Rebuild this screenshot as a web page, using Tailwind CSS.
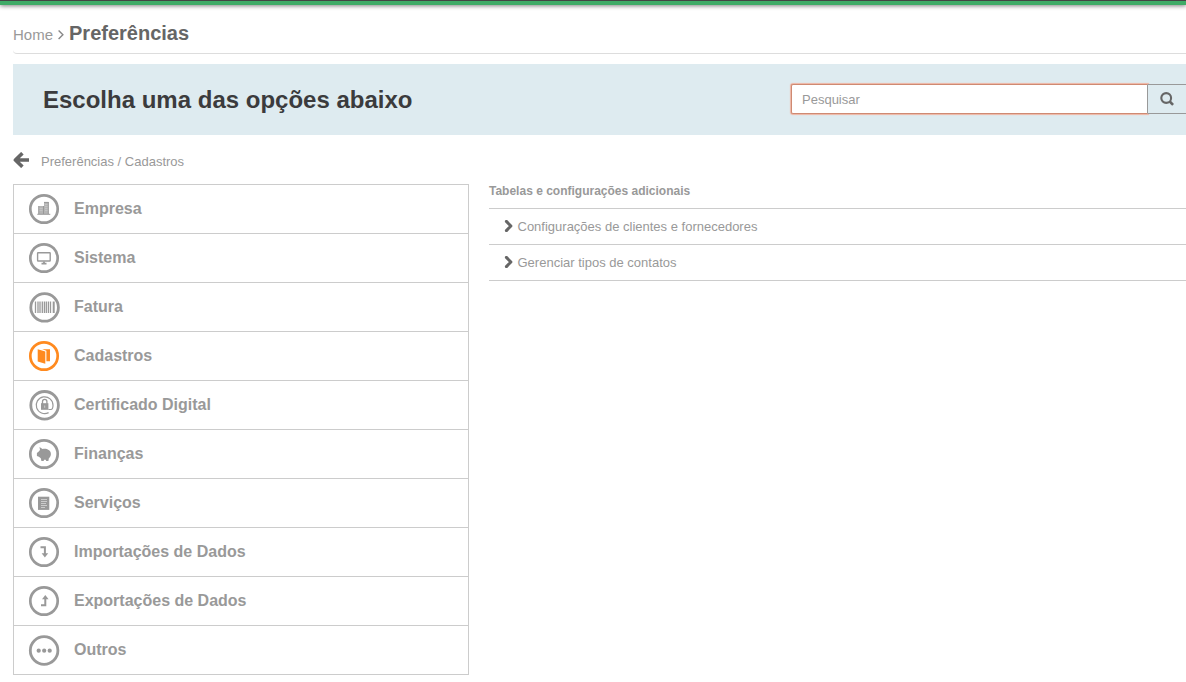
<!DOCTYPE html>
<html lang="pt-BR">
<head>
  <meta charset="UTF-8">
  <meta name="viewport" content="width=device-width, initial-scale=1.0">
  <title>Preferências</title>
  <script src="https://cdn.jsdelivr.net/npm/@tailwindcss/browser@4"></script>
</head>
<body class="bg-white h-screen overflow-hidden font-['Liberation_Sans',Arial,sans-serif] text-[13px] text-[#999]">
  <header class="h-[5px] bg-[#3fab67] border-t border-[#444] shadow-[0_1px_4px_rgba(0,0,0,0.5)]"></header>

  <main class="pl-[13px]">
    <!-- Breadcrumb -->
    <nav class="h-[49px] pt-[15px] flex items-baseline border-b border-[#ddd] rounded-bl-[4px]">
      <a href="#" class="text-[15px] leading-[26px]">Home</a>
      <svg class="w-[6px] h-[10px] ml-[5px] mr-[5px] self-start mt-[10px]" viewBox="0 0 6 10" fill="none" stroke="#888" stroke-width="1.4"><path d="M.6 .5L4.9 4.8.6 9.1"/></svg>
      <h1 class="text-xl leading-[26px] font-bold text-[#666]">Preferências</h1>
    </nav>

    <!-- Search banner -->
    <section class="mt-[10px] h-[71px] bg-[#deebf0] pl-[30px] flex items-center justify-between">
      <h2 class="text-2xl font-bold text-[#3b3b3d]">Escolha uma das opções abaixo</h2>
      <div class="flex h-[30px] mb-px">
        <input type="text" placeholder="Pesquisar" class="w-[357px] h-[30px] px-[10px] bg-white border border-r-[#999] border-[#cf8a72] rounded-l-[2px] shadow-[0_0_1px_1px_#efb5a3] text-[13px] placeholder:text-[#999]">
        <button type="button" class="relative w-[38px] bg-[#deebf0] border-y border-[#999] flex items-center justify-center">
          <svg class="w-[14px] h-[14px]" viewBox="0 0 14 14" fill="none" stroke="#666"><circle cx="6.2" cy="6" r="4.9" stroke-width="2.1"/><path d="M9.7 9.5l3.4 3.4" stroke-width="2.6"/></svg>
        </button>
      </div>
    </section>

    <div class="flex items-center h-[49px]">
      <svg class="w-[16px] h-[16px]" viewBox="0 0 16 16" fill="none" stroke="#666" stroke-width="3.6" stroke-linejoin="round"><path d="M16 8H3M9.4 1.2L2.4 8l7 6.8"/></svg>
      <span class="ml-[12px] mt-[5px]">Preferências / Cadastros</span>
    </div>

    <div class="flex items-start gap-5">
      <ul class="w-[456px] shrink-0 border border-[#ccc] divide-y divide-[#ccc] text-base font-bold">
        <li class="flex items-center gap-[15px] pl-[15px] h-[49px]">
          <svg class="w-[30px] h-[30px] overflow-visible" viewBox="0 0 30 30" fill="none">
            <circle cx="15" cy="15" r="13.7" stroke="#999" stroke-width="2.7"/>
            <path d="M9.5 12h5v8h-5zM15 8h4.5v12H15z" fill="#b5b5b5"/>
            <path d="M8.3 20.3h13M14.5 12v8M19.3 8v12M9.8 12v8M15 8.4h4.5" stroke="#999"/>
            <path d="M16 10.5h2.5M16 12.5h2.5M16 14.5h2.5M16 16.5h2.5M10.5 14.5h3M10.5 16.5h3" stroke="#ccc" stroke-width=".6"/>
          </svg>
          <span>Empresa</span>
        </li>
        <li class="flex items-center gap-[15px] pl-[15px] h-[49px]">
          <svg class="w-[30px] h-[30px] overflow-visible" viewBox="0 0 30 30" fill="none" stroke="#999">
            <circle cx="15" cy="15" r="13.7" stroke-width="2.7"/>
            <rect x="8.6" y="9.7" width="12.6" height="8.3" rx=".5" stroke-width="1.4"/>
            <path d="M15 18.5v2M12.5 20.6h5" stroke-width="1.8"/>
          </svg>
          <span>Sistema</span>
        </li>
        <li class="flex items-center gap-[15px] pl-[15px] h-[49px]">
          <svg class="w-[30px] h-[30px] overflow-visible" viewBox="0 0 30 30" fill="none" stroke="#999">
            <circle cx="15.6" cy="15.4" r="13.8" stroke-width="2.8"/>
            <path d="M6.5 9.5v11.5M9 9.5v11.5M13.3 9.5v11.5M17.3 9.5v11.5M21.5 9.5v11.5" stroke-width="1.3"/>
            <path d="M11 9.5v11.5M15.4 9.5v11.5M19.4 9.5v11.5" stroke-width="1.3"/>
            <path d="M24.7 9.5v11.5" stroke-width="2"/>
          </svg>
          <span>Fatura</span>
        </li>
        <li class="flex items-center gap-[15px] pl-[15px] h-[49px]">
          <svg class="w-[30px] h-[30px] overflow-visible" viewBox="0 0 30 30" fill="none">
            <circle cx="15" cy="15" r="13.7" stroke="#ff8a1f" stroke-width="2.7"/>
            <path d="M8.7 8.2l7.6 2.4v12.2l-7.6-2.3zM13.3 8.2H21v12h-3.6V9.8z" fill="#ff8a1f"/>
          </svg>
          <span>Cadastros</span>
        </li>
        <li class="flex items-center gap-[15px] pl-[15px] h-[49px]">
          <svg class="w-[30px] h-[30px] overflow-visible" viewBox="0 0 30 30" fill="none" stroke="#999">
            <circle cx="15.6" cy="15.3" r="13.8" stroke-width="2.8"/>
            <path d="M19.6 22.6a8.4 8.4 0 1 1 4.4-7.3c0 2.2-.6 4.2-2.1 4.2h-2.5" stroke-width="1.2"/>
            <path d="M13.5 14v-2.4a2.2 2.2 0 0 1 4.4 0V14" stroke-width="1.3"/>
            <rect x="12" y="13.2" width="7.4" height="6.6" fill="#999" stroke="none"/>
            <path d="M15.7 15.5v2.3" stroke="#ccc"/>
          </svg>
          <span>Certificado Digital</span>
        </li>
        <li class="flex items-center gap-[15px] pl-[15px] h-[49px]">
          <svg class="w-[30px] h-[30px] overflow-visible" viewBox="0 0 30 30" fill="none">
            <circle cx="15" cy="15" r="13.7" stroke="#999" stroke-width="2.7"/>
            <path d="M10.5 8l3 2c3.5-1 7.8.6 8.3 4 .4 2.2-.4 4-2 5.4l-.4 2.6h-2.2l-.5-1.3h-1.6l-.5 1.3h-2.2l-.6-2.7-1.9-1.6-2-.8v-3l1.6-1.1 1.5-1.9z" fill="#999"/>
          </svg>
          <span>Finanças</span>
        </li>
        <li class="flex items-center gap-[15px] pl-[15px] h-[49px]">
          <svg class="w-[30px] h-[30px] overflow-visible" viewBox="0 0 30 30" fill="none">
            <circle cx="15" cy="15" r="13.7" stroke="#999" stroke-width="2.7"/>
            <path d="M9 8.7h11.3v13.2H9z" fill="#999"/>
            <path d="M12 11.5h6M12 13.5h6M12 15.5h5M12 17.5h6M12 19.5h4" stroke="#d8d8d8" stroke-width=".8"/>
          </svg>
          <span>Serviços</span>
        </li>
        <li class="flex items-center gap-[15px] pl-[15px] h-[49px]">
          <svg class="w-[30px] h-[30px] overflow-visible" viewBox="0 0 30 30" fill="none">
            <circle cx="15" cy="15" r="13.7" stroke="#999" stroke-width="2.7"/>
            <path d="M11.5 10.3h4.4v7" stroke="#999" stroke-width="2"/>
            <path d="M12.6 16.3h6.6L15.9 20.5z" fill="#999"/>
          </svg>
          <span>Importações de Dados</span>
        </li>
        <li class="flex items-center gap-[15px] pl-[15px] h-[49px]">
          <svg class="w-[30px] h-[30px] overflow-visible" viewBox="0 0 30 30" fill="none">
            <circle cx="15" cy="15" r="13.7" stroke="#999" stroke-width="2.7"/>
            <path d="M12 19.2h4.3v-7" stroke="#999" stroke-width="2"/>
            <path d="M13 13.2h6.6L16.3 9z" fill="#999"/>
          </svg>
          <span>Exportações de Dados</span>
        </li>
        <li class="flex items-center gap-[15px] pl-[15px] h-12">
          <svg class="w-[30px] h-[30px] overflow-visible" viewBox="0 0 30 30" fill="none">
            <circle cx="15.1" cy="15.5" r="13.8" stroke="#999" stroke-width="2.8"/>
            <g fill="#999"><circle cx="9.7" cy="15.7" r="2.1"/><circle cx="15.2" cy="15.7" r="2.1"/><circle cx="20.7" cy="15.7" r="2.1"/></g>
          </svg>
          <span>Outros</span>
        </li>
      </ul>

      <section class="flex-1">
        <h3 class="h-[25px] pt-px text-xs leading-[13px] font-bold border-b border-[#ccc]">Tabelas e configurações adicionais</h3>
        <a href="#" class="flex items-center h-9 pl-[15px] border-b border-[#ccc]">
          <svg class="w-[9px] h-[12px] mr-[4.5px] mb-[2px]" viewBox="0 0 9 12" fill="none" stroke="#666" stroke-width="3" stroke-linecap="round" stroke-linejoin="round"><path d="M2.4 1.4L6.9 6l-4.5 4.6"/></svg>
          Configurações de clientes e fornecedores
        </a>
        <a href="#" class="flex items-center h-9 pl-[15px] border-b border-[#ccc]">
          <svg class="w-[9px] h-[12px] mr-[4.5px] mb-[2px]" viewBox="0 0 9 12" fill="none" stroke="#666" stroke-width="3" stroke-linecap="round" stroke-linejoin="round"><path d="M2.4 1.4L6.9 6l-4.5 4.6"/></svg>
          Gerenciar tipos de contatos
        </a>
      </section>
    </div>
  </main>
</body>
</html>
